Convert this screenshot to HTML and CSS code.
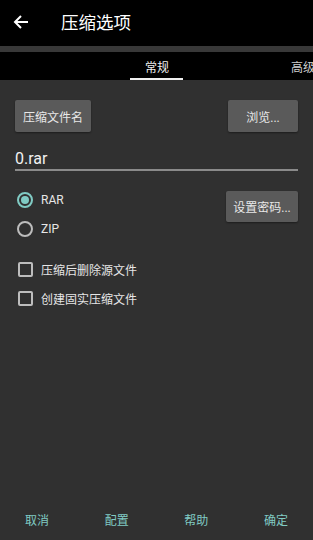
FILE: index.html
```html
<!DOCTYPE html>
<html lang="zh">
<head>
    <meta charset="UTF-8">
    <meta name="viewport" content="width=device-width, initial-scale=1.0">
    <title>压缩选项</title>
    <link rel="stylesheet" href="styles.css">
</head>
<body>
    <div class="app">
        <!-- 顶部栏 -->
        <div class="toolbar">
            <svg class="back" width="16" height="16" viewBox="0 0 16 16">
                <path d="M15 8H2M8 2L2 8l6 6" stroke="#fff" stroke-width="2" fill="none"/>
            </svg>
            <span class="title">压缩选项</span>
        </div>
        <div class="strip"></div>

        <!-- 标签页 -->
        <div class="tabs">
            <div class="tab active"><span>常规</span></div>
            <div class="tab"><span>高级</span></div>
        </div>

        <div class="content">
            <div class="row">
                <button class="btn">压缩文件名</button>
                <button class="btn btn-browse">浏览...</button>
            </div>
            <div class="field">0.rar</div>

            <div class="row format-row">
                <div class="radios">
                    <label class="radio checked"><span class="dot"></span>RAR</label>
                    <label class="radio"><span class="dot"></span>ZIP</label>
                </div>
                <button class="btn btn-pass">设置密码...</button>
            </div>

            <div class="checks">
                <label class="check"><span class="box"></span>压缩后删除源文件</label>
                <label class="check"><span class="box"></span>创建固实压缩文件</label>
            </div>
        </div>

        <div class="footer">
            <span>取消</span>
            <span>配置</span>
            <span>帮助</span>
            <span>确定</span>
        </div>
    </div>
</body>
</html>
```

FILE: styles.css
```css
* {
    box-sizing: border-box;
}
body {
    margin: 0;
    background-color: #303030;
    font-family: Roboto, "Noto Sans CJK SC", sans-serif;
    color: #e6e6e6;
}
.app {
    width: 313px;
    height: 540px;
    display: flex;
    flex-direction: column;
    overflow: hidden;
}

/* 顶部栏 */
.toolbar {
    height: 46px;
    background-color: #000;
    display: flex;
    align-items: center;
    padding-left: 13px;
}
.back {
    margin-top: -2px;
}
.title {
    margin-left: 32px;
    margin-top: -3px;
    font-size: 17.5px;
    color: #fff;
}
.strip {
    height: 6px;
    background-color: #383838;
}

/* 标签页 */
.tabs {
    height: 28px;
    background-color: #000;
    display: flex;
    padding-left: 84px;
    white-space: nowrap;
}
.tab {
    flex: 0 0 146px;
    display: flex;
    justify-content: center;
    align-items: center;
    font-size: 12px;
    color: #cfcfcf;
    position: relative;
}
.tab.active span {
    color: #eee;
}
.tab.active::after {
    content: "";
    position: absolute;
    bottom: 0;
    left: 46px;
    width: 53px;
    height: 2px;
    background-color: #f0f0f0;
}

/* 内容 */
.content {
    padding: 20px 15px 0 15px;
}
.row {
    display: flex;
    justify-content: space-between;
    align-items: flex-start;
}
.btn {
    height: 32px;
    padding: 0 7px;
    border: none;
    border-radius: 2px;
    background-color: #5a5a5a;
    color: #e8e8e8;
    font-family: Roboto, "Noto Sans CJK SC", sans-serif;
    font-size: 12px;
    box-shadow: 0 1px 2px rgba(0, 0, 0, 0.4);
}
.btn:first-child {
    width: 76px;
}
.btn-browse {
    width: 70px;
}
.btn-pass {
    width: 72px;
    height: 31px;
    margin-top: 3px;
    padding: 0;
}
.field {
    margin-top: 17px;
    height: 22px;
    font-size: 16px;
    line-height: 20px;
    color: #f2f2f2;
    border-bottom: 2px solid #8a8a8a;
}
.format-row {
    margin-top: 17px;
}
.radios {
    display: flex;
    flex-direction: column;
    gap: 10px;
    padding-top: 2px;
}
.radio, .check {
    display: flex;
    align-items: center;
    font-size: 12px;
    height: 19px;
    color: #e6e6e6;
}
.dot {
    width: 16px;
    height: 16px;
    margin: 0 8px 0 2px;
    border: 2px solid #bdbdbd;
    border-radius: 50%;
    display: flex;
    justify-content: center;
    align-items: center;
}
.radio.checked .dot {
    border-color: #80cbc4;
}
.radio.checked .dot::after {
    content: "";
    width: 8px;
    height: 8px;
    border-radius: 50%;
    background-color: #80cbc4;
}
.checks {
    margin-top: 22px;
    display: flex;
    flex-direction: column;
    gap: 10px;
}
.box {
    width: 15px;
    height: 15px;
    margin: 0 8px 0 3px;
    border: 2px solid #bdbdbd;
    border-radius: 2px;
}

/* 底部按钮 */
.footer {
    margin-top: auto;
    height: 29px;
    padding: 0 25px 0 25px;
    display: flex;
    justify-content: space-between;
    align-items: flex-start;
    font-size: 12px;
    color: #80cbc4;
}
```
